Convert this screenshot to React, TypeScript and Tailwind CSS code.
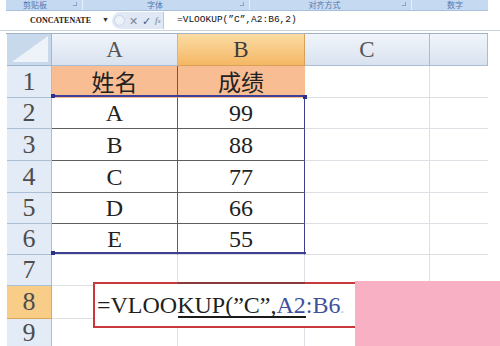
import React from "react";

const serif = { fontFamily: '"Liberation Serif", "DejaVu Serif", "Noto Serif", serif' };
const mono = { fontFamily: '"Liberation Mono", "DejaVu Sans Mono", monospace' };
const cjk = { fontFamily: '"Noto Sans CJK SC", "Noto Sans CJK JP", sans-serif' };

const rowHeights = [32, 31, 32, 32, 31, 31, 31, 33, 29];
const data: [string, string][] = [
  ["姓名", "成绩"],
  ["A", "99"],
  ["B", "88"],
  ["C", "77"],
  ["D", "66"],
  ["E", "55"],
  ["", ""],
  ["", ""],
  ["", ""],
];

function RowHeader({ n }: { n: number }) {
  const sel = n === 8;
  return (
    <div
      className={`w-[45px] shrink-0 flex items-center justify-center border-r border-b ${
        sel ? "bg-[#f8cd87] border-[#d9a85a]" : "bg-[#e3ebf6] border-[#a9bfd6]"
      } text-[26px] text-[#4d4d4d] leading-none`}
      style={serif}
    >
      {n}
    </div>
  );
}

function Launcher() {
  return <span className="absolute right-[5px] top-[2px] w-[4px] h-[4px] border-r border-b border-[#8aa4c8]" />;
}

export default function App() {
  return (
    <div className="relative w-[500px] h-[346px] overflow-hidden bg-white">
      {/* ribbon group labels */}
      <div className="flex h-[11px] ml-[6px] w-[482px] bg-[#c5d9f1] border-b border-[#a7c0df] text-[8px] text-[#5576ae]" style={cjk}>
        <div className="relative w-[77px] border-r border-[#e6eef9] flex items-center justify-center pr-[18px]">
          <span className="leading-none">剪贴板</span>
          <Launcher />
        </div>
        <div className="relative w-[167px] border-r border-[#e6eef9] flex items-center justify-center pr-[22px]">
          <span className="leading-none">字体</span>
          <Launcher />
        </div>
        <div className="relative w-[162px] border-r border-[#e6eef9] flex items-center justify-center pr-[12px]">
          <span className="leading-none">对齐方式</span>
          <Launcher />
        </div>
        <div className="flex-1 flex items-center justify-center pl-[10px]">
          <span className="leading-none">数字</span>
        </div>
      </div>
      {/* formula bar */}
      <div className="flex h-[17px] mt-[1px] items-center">
        <div className="w-[106px] ml-[6px] h-full flex items-center bg-white">
          <span className="ml-[24px] text-[8px] font-bold text-[#222]" style={serif}>
            CONCATENATE
          </span>
          <span className="ml-auto mr-[3px] text-[7px] text-[#333]">▼</span>
        </div>
        <div className="w-[51px] h-full flex items-center gap-[4px] bg-[#dfe8f4] rounded-l-full pl-[2px]">
          <span className="w-[11px] h-[11px] rounded-full bg-[#eef3f9] border border-[#c8d6e8]" />
          <span className="text-[11px] leading-none text-[#7a8495]">✕</span>
          <span className="text-[11px] leading-none text-[#3f5f8e]">✓</span>
          <span className="text-[9px] italic text-[#6d7a8c]" style={serif}>f<span className="text-[7px]">x</span></span>
        </div>
        <div className="flex-1 h-full border-l border-[#b8c7da] flex items-center pl-[13px] text-[9.5px] text-[#111]" style={mono}>
          =VLOOKUP(”C”,A2:B6,2)
        </div>
      </div>
      <div className="h-[1px] bg-[#c9d3df] mt-[1px]" />
      <div className="h-[2px]" />
      <div className="h-[1px] bg-[#9fb2c8] w-[482px] ml-[6px]" />
      {/* grid */}
      <div className="ml-[7px] w-[481px]">
        {/* column header */}
        <div className="flex h-[32px]">
          <div className="relative w-[45px] shrink-0 bg-[#c9d9ec] border-r border-b border-[#9fb6cf] overflow-hidden">
            <div
              className="absolute right-[3px] bottom-[3px] w-[36px] h-[26px] bg-[#eef3fa]"
              style={{ clipPath: "polygon(100% 0, 100% 100%, 0 100%)" }}
            />
          </div>
          {[
            ["A", 126, false],
            ["B", 127, true],
            ["C", 125, false],
            ["", 58, false],
          ].map(([l, w, s], i) => (
            <div
              key={i}
              className={`shrink-0 flex items-center justify-center border-r border-b text-[23px] leading-none ${
                s
                  ? "bg-gradient-to-b from-[#fbdca4] to-[#f4b763] border-[#d9a05a] text-[#3d3d3d]"
                  : "bg-gradient-to-b from-[#f1f5fb] to-[#d8e2ef] border-[#a8bcd4] text-[#555]"
              }`}
              style={{ ...serif, width: w as number }}
            >
              {l as string}
            </div>
          ))}
        </div>
        {rowHeights.map((h, r) => {
          const n = r + 1;
          const [a, b] = data[r];
          const isHead = n === 1;
          const inData = n >= 2 && n <= 6;
          const darkBottom = n >= 2 && n <= 5;
          return (
            <div key={n} className="flex" style={{ height: h }}>
              <RowHeader n={n} />
              <div
                className={`w-[126px] shrink-0 flex items-center justify-center border-b border-r text-[#222] ${
                  isHead ? "bg-[#f8bd92] text-[23px]" : "text-[24px]"
                } ${darkBottom ? "border-b-[#5e5e5e]" : isHead ? "border-b-[#f8bd92]" : "border-b-[#dcdfe3]"} ${
                  n <= 6 ? "border-r-[#5e5e5e]" : "border-r-[#dcdfe3]"
                } leading-none`}
                style={isHead ? cjk : serif}
              >
                {a}
              </div>
              <div
                className={`w-[127px] shrink-0 flex items-center justify-center border-b border-r text-[#222] ${
                  isHead ? "bg-[#f8bd92] text-[23px]" : "text-[24px]"
                } ${darkBottom ? "border-b-[#5e5e5e]" : isHead ? "border-b-[#f8bd92]" : "border-b-[#dcdfe3]"} ${
                  inData ? "border-r-[#3c3f94]" : isHead ? "border-r-[#f8bd92]" : "border-r-[#dcdfe3]"
                } leading-none`}
                style={isHead ? cjk : serif}
              >
                {b}
              </div>
              <div className="w-[125px] shrink-0 border-b border-r border-[#dcdfe3]" />
              <div className="w-[58px] shrink-0 border-b border-[#dcdfe3]" />
            </div>
          );
        })}
      </div>
      {/* range highlight A2:B6 */}
      <div className="absolute left-[52px] top-[95px] w-[254px] h-[159px] border-t-2 border-b-2 border-[#3c3f94] pointer-events-none" />
      <div className="absolute left-[51px] top-[94px] w-[4px] h-[4px] bg-[#2d2f8a]" />
      <div className="absolute left-[303px] top-[95px] w-[4px] h-[4px] bg-[#2d2f8a]" />
      <div className="absolute left-[51px] top-[251px] w-[4px] h-[4px] bg-[#2d2f8a]" />
      {/* in-cell formula editor */}
      <div className="absolute left-[93px] top-[282px] w-[300px] h-[46px] bg-white border-2 border-[#c9383c] flex items-center">
        <span className="ml-[2px] text-[24px] leading-none text-[#1f1f1f]" style={serif}>
          =VLOOKUP(”C”,<span className="text-[#3e4f9e]">A2:B6</span>
          <span className="text-[#b9b9b9] text-[14px]">.</span>
        </span>
      </div>
      <div className="absolute left-[178px] top-[282px] w-[127px] h-[2px] bg-[#8a3a3a]" />
      <div className="absolute left-[178px] top-[316px] w-[128px] h-[2px] bg-[#1a1a1a]" />
      {/* pink patch */}
      <div className="absolute left-[355px] top-[281px] w-[145px] h-[65px] bg-[#f8b0c4]" />
    </div>
  );
}
